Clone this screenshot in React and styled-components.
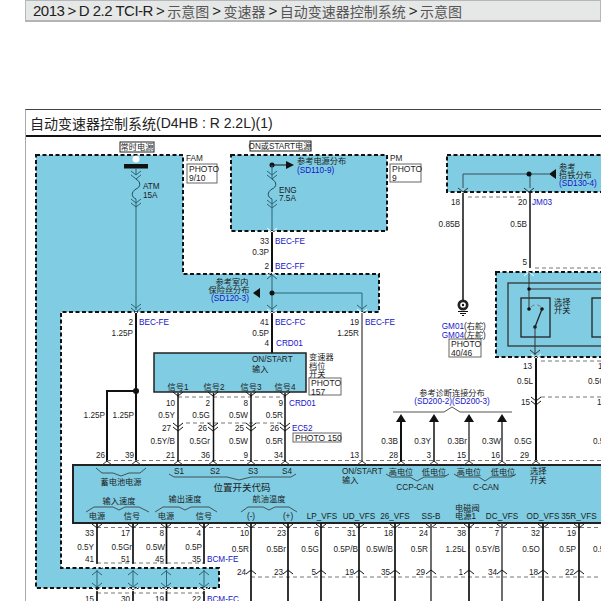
import React from 'react'
import styled, { createGlobalStyle } from 'styled-components'

const GlobalStyle = createGlobalStyle`
  html, body {
    margin: 0;
    padding: 0;
    background: #fff;
    overflow: hidden;
  }
`

const Page = styled.div`
  width: 601px;
  height: 601px;
  padding-left: 25px;
  box-sizing: border-box;
  overflow: hidden;
  font-family: "Liberation Sans", "Noto Sans CJK SC", sans-serif;
`

const Crumbs = styled.div`
  height: 22px;
  box-sizing: border-box;
  margin-bottom: 87px;
  padding-left: 7px;
  display: flex;
  align-items: center;
  gap: 3px;
  white-space: nowrap;
  background: #e6e7e7;
  border: 1px solid #b4b8bc;
  border-top: 1px solid #b4b8bc;
  border-bottom: 2px solid #b4b4b4;
  font-size: 15px;
  letter-spacing: -0.5px;
  color: #222;
`

const Zh = styled.span`
  font-family: "Noto Sans CJK SC", sans-serif;
  font-size: 14px;
  letter-spacing: 0;
  color: #555;
`

const Panel = styled.div`
  width: 600px;
  border-top: 1px solid #444;
  border-left: 1px solid #aaa;
`

const Title = styled.div`
  height: 25px;
  padding-left: 4px;
  display: flex;
  align-items: center;
  white-space: nowrap;
  border-bottom: 2px solid #111;
  font-family: "Noto Sans CJK SC", sans-serif;
  font-size: 14px;
  color: #222;
`

const TitleLatin = styled.span`
  font-family: "Liberation Sans", sans-serif;
  font-size: 14px;
`

const Diagram = styled.svg`
  display: block;
  width: 576px;
  height: 464px;
`

const Zone = styled.polygon`
  fill: #80cce2;
  stroke: #111;
  stroke-width: 2;
  stroke-dasharray: 4 2.5;
`

const Wire = styled.path`
  fill: none;
  stroke: ${(p) => p.$color || '#111'};
  stroke-width: ${(p) => p.$w || 1.5};
`

const Dash = styled.path`
  fill: none;
  stroke: #777;
  stroke-width: 1;
  stroke-dasharray: 4 3;
`

const Solid = styled.path`
  fill: ${(p) => p.$fill || '#111'};
`

const Box = styled.rect`
  fill: ${(p) => p.$fill || 'none'};
  stroke: ${(p) => p.$color || '#222'};
  stroke-width: ${(p) => p.$w || 1};
`

const Dot = styled.circle`
  fill: ${(p) => p.$fill || '#111'};
`

const Label = styled.text`
  font-family: "Liberation Sans", "Noto Sans CJK SC", sans-serif;
  font-size: ${(p) => p.$size || 8.2}px;
  fill: ${(p) => (p.$ref ? '#1414c8' : '#1c1c1c')};
  text-anchor: ${(p) => p.$anchor || 'start'};
`

const TEAL = '#2b6474'

const zones = [
  '35,155 182,155 182,274 378,274 378,312 60,312 60,568 218,568 218,588 35,588',
  '230,155 386,155 386,231 230,231',
  '446,155 610,155 610,192 446,192',
  '495,272 610,272 610,357 495,357',
]

// [x, y, text, anchor, isRef, size]
const labels = [
  // power feeds
  [136, 150, '常时电源', 'middle'],
  [279, 149, 'ON或START电源', 'middle'],
  [185, 161, 'FAM'],
  [142, 189, 'ATM'],
  [142, 198, '15A'],
  [278, 193, 'ENG'],
  [278, 201, '7.5A'],
  [296, 164, '参考电源分布'],
  [296, 172.5, '(SD110-9)', 'start', true],
  [389, 161, 'PM'],
  [558, 170, '参考'],
  [558, 178, '搭铁分布'],
  [558, 186, '(SD130-4)', 'start', true],
  [459, 205, '18', 'end'],
  [526, 205, '20', 'end'],
  [531, 205, 'JM03', 'start', true],
  [459, 227, '0.85B', 'end'],
  [526, 227, '0.5B', 'end'],
  [526, 265, '5', 'end'],
  // centre column
  [268, 244, '33', 'end'],
  [274, 244, 'BEC-FE', 'start', true],
  [268, 255, '0.3P', 'end'],
  [268, 269, '2', 'end'],
  [274, 269, 'BEC-FF', 'start', true],
  [231, 285, '参考室内', 'middle'],
  [228, 293, '保险丝分布', 'middle'],
  [229, 301, '(SD120-3)', 'middle', true],
  [268, 325, '41', 'end'],
  [274, 325, 'BEC-FC', 'start', true],
  [268, 336, '0.5P', 'end'],
  [268, 346, '4', 'end'],
  [275, 346, 'CRD01', 'start', true],
  [358, 325, '19', 'end'],
  [364, 325, 'BEC-FE', 'start', true],
  [358, 336, '1.25R', 'end'],
  [132, 325, '2', 'end'],
  [138, 325, 'BEC-FE', 'start', true],
  [132, 336, '1.25P', 'end'],
  // transmission switch
  [251, 362, 'ON/START'],
  [251, 372, '输入'],
  [308, 360, '变速器'],
  [308, 369, '档位'],
  [308, 377, '开关'],
  [177, 390, '信号1', 'middle'],
  [213, 390, '信号2', 'middle'],
  [250, 390, '信号3', 'middle'],
  [284, 390, '信号4', 'middle'],
  [174, 406, '10', 'end'],
  [209, 406, '2', 'end'],
  [247, 406, '8', 'end'],
  [282, 406, '9', 'end'],
  [288, 406, 'CRD01', 'start', true],
  [174, 418, '0.5Y', 'end'],
  [209, 418, '0.5G', 'end'],
  [247, 418, '0.5W', 'end'],
  [282, 418, '0.5R', 'end'],
  [170, 431, '27', 'end'],
  [206, 431, '26', 'end'],
  [243, 431, '25', 'end'],
  [278, 431, '26', 'end'],
  [291, 431, 'EC52', 'start', true],
  [174, 444, '0.5Y/B', 'end'],
  [209, 444, '0.5Gr', 'end'],
  [247, 444, '0.5W', 'end'],
  [282, 444, '0.5R', 'end'],
  [104, 418, '1.25P', 'end'],
  [133, 418, '1.25P', 'end'],
  [104, 458, '26', 'end'],
  [133, 458, '39', 'end'],
  [174, 458, '21', 'end'],
  [209, 458, '36', 'end'],
  [247, 458, '9', 'end'],
  [282, 458, '34', 'end'],
  [358, 458, '13', 'end'],
  [397, 458, '28', 'end'],
  [430, 458, '3', 'end'],
  [465, 458, '15', 'end'],
  [499, 458, '16', 'end'],
  [528, 458, '29', 'end'],
  [451, 396, '参考诊断连接分布', 'middle'],
  [451, 404, '(SD200-2)(SD200-3)', 'middle', true],
  [397, 444, '0.3B', 'end'],
  [430, 444, '0.3Y', 'end'],
  [466, 444, '0.3Br', 'end'],
  [500, 444, '0.3W', 'end'],
  [531, 444, '0.5G', 'end'],
  [592, 444, '0.5'],
  // ground and selector
  [463, 329, 'GM01', 'end', true],
  [463, 337.5, 'GM04', 'end', true],
  [463, 329, '(右舵)'],
  [463, 337.5, '(左舵)'],
  [553, 305, '选择'],
  [553, 313, '开关'],
  [531, 369, '13', 'end'],
  [532, 384, '0.5L', 'end'],
  [529, 405, '15', 'end'],
  [597, 369, '1'],
  [587, 384, '0.50'],
  [596, 405, '15'],
  // TCM connector, upper row
  [178, 474, 'S1', 'middle'],
  [214, 474, 'S2', 'middle'],
  [252, 474, 'S3', 'middle'],
  [286, 474, 'S4', 'middle'],
  [341, 474, 'ON/START'],
  [341, 483, '输入'],
  [400, 475, '高电位', 'middle'],
  [433, 475, '低电位', 'middle'],
  [468, 475, '高电位', 'middle'],
  [502, 475, '低电位', 'middle'],
  [529, 474, '选择'],
  [529, 483, '开关'],
  [414, 490, 'CCP-CAN', 'middle'],
  [485, 490, 'C-CAN', 'middle'],
  [120, 485, '蓄电池电源', 'middle'],
  [241, 491, '位置开关代码', 'middle', false, 9.5],
  [118, 504, '输入速度', 'middle'],
  [184, 502, '输出速度', 'middle'],
  [268, 502, '航油温度', 'middle'],
  // TCM connector, lower row
  [96, 519, '电源', 'middle'],
  [131, 519, '信号', 'middle'],
  [165, 519, '电源', 'middle'],
  [203, 519, '信号', 'middle'],
  [250, 519, '(-)', 'middle'],
  [287, 519, '(+)', 'middle'],
  [321, 519, 'LP_VFS', 'middle'],
  [358, 519, 'UD_VFS', 'middle'],
  [394, 519, '26_VFS', 'middle'],
  [430, 519, 'SS-B', 'middle'],
  [454, 511, '电磁阀'],
  [454, 519, '电源1'],
  [501, 519, 'DC_VFS', 'middle'],
  [542, 519, 'OD_VFS', 'middle'],
  [578, 519, '35R_VFS', 'middle'],
  // below connector
  [93, 536, '33', 'end'],
  [129, 536, '17', 'end'],
  [163, 536, '8', 'end'],
  [200, 536, '4', 'end'],
  [93, 550, '0.5Y', 'end'],
  [131, 550, '0.5Gr', 'end'],
  [164, 550, '0.5W', 'end'],
  [201, 550, '0.5P', 'end'],
  [93, 562, '41', 'end'],
  [129, 562, '51', 'end'],
  [163, 562, '45', 'end'],
  [200, 562, '35', 'end'],
  [206, 562, 'BCM-FE', 'start', true],
  [93, 602, '15', 'end'],
  [129, 602, '30', 'end'],
  [163, 602, '19', 'end'],
  [200, 602, '22', 'end'],
  [206, 602, 'BCM-FC', 'start', true],
  [248, 536, '10', 'end'],
  [285, 536, '23', 'end'],
  [318, 536, '6', 'end'],
  [355, 536, '31', 'end'],
  [392, 536, '18', 'end'],
  [427, 536, '24', 'end'],
  [465, 536, '38', 'end'],
  [498, 536, '7', 'end'],
  [539, 536, '32', 'end'],
  [575, 536, '19', 'end'],
  [248, 552, '0.5R', 'end'],
  [285, 552, '0.5Br', 'end'],
  [318, 552, '0.5G', 'end'],
  [357, 552, '0.5P/B', 'end'],
  [392, 552, '0.5W/B', 'end'],
  [427, 552, '0.5R', 'end'],
  [465, 552, '1.25L', 'end'],
  [499, 552, '0.5Y/B', 'end'],
  [539, 552, '0.5O', 'end'],
  [575, 552, '0.5P', 'end'],
  [592, 552, '0.5'],
  [245, 575, '24', 'end'],
  [282, 575, '23', 'end'],
  [315, 575, '5', 'end'],
  [353, 575, '19', 'end'],
  [389, 575, '35', 'end'],
  [424, 575, '29', 'end'],
  [462, 575, '1', 'end'],
  [496, 575, '34', 'end'],
  [537, 575, '18', 'end'],
  [573, 575, '22', 'end'],
]

const topPins = [106, 135, 177, 212, 250, 284, 361, 400, 433, 468, 501, 535]
const bottomPins = [96, 132, 165, 203, 250, 287, 320, 358, 394, 430, 468, 501, 542, 578]

// Connector mark: a V for a plug, flipped for a socket
const Pin = ({ x, y, up, color = '#111' }) => (
  <Wire
    $w={1}
    $color={color}
    d={up ? `M${x - 5} ${y + 4} L${x} ${y} L${x + 5} ${y + 4}` : `M${x - 5} ${y - 4} L${x} ${y} L${x + 5} ${y - 4}`}
  />
)

const Chevrons = ({ x, y, color }) => (
  <>
    <Pin x={x} y={y} color={color} />
    <Pin x={x} y={y + 4} color={color} />
  </>
)

const Arrow = ({ x, y }) => <Solid d={`M${x - 5} ${y + 8} L${x} ${y} L${x + 5} ${y + 8} Z`} />

const ArrowLeft = ({ x, y }) => <Solid d={`M${x} ${y} L${x + 7} ${y - 5} L${x + 7} ${y + 5} Z`} />

const Photo = ({ x, y, w, h, lines }) => (
  <>
    <Box x={x} y={y} width={w} height={h} $fill="#fff" $color="#666" />
    {lines.map((line, i) => (
      <Label key={line} x={x + 2} y={y + 8 + i * 8.5} $size={8.5}>
        {line}
      </Label>
    ))}
  </>
)

const Fuse = ({ x, y }) => (
  <Wire $w={1} $color="#1d4a58" d={`M${x} ${y} c5 3 5 8 0 10 c-5 3 -5 8 0 10`} />
)

const App = () => (
  <Page>
    <GlobalStyle />
    <Crumbs>
      <span>2013</span>&gt;<span>D 2.2 TCI-R</span>&gt;<Zh>示意图</Zh>&gt;<Zh>变速器</Zh>&gt;
      <Zh>自动变速器控制系统</Zh>&gt;<Zh>示意图</Zh>
    </Crumbs>
    <Panel>
      <Title>
        自动变速器控制系统<TitleLatin>(D4HB : R 2.2L)(1)</TitleLatin>
      </Title>
      <Diagram viewBox="25 137 576 464">
        {zones.map((points) => (
          <Zone key={points} points={points} />
        ))}

        {/* battery feed */}
        <Box x={119} y={142} width={34} height={10} $fill="#fff" />
        <Box x={249} y={141} width={61} height={10} $fill="#fff" />
        <Solid d="M123 164 H147 V168.5 H123 Z" />
        <Dot cx={135} cy={159} r={3.5} $fill="#fff" />
        <Pin x={135} y={175} color={TEAL} />
        <Pin x={135} y={179} color={TEAL} />
        <Fuse x={135} y={179} />
        <Chevrons x={135} y={203} color={TEAL} />
        <Wire $w={1} $color={TEAL} d="M135 168 V175 M135 199 V310" />
        <Chevrons x={135} y={308} color={TEAL} />
        <Wire $w={2} d="M135 313 V462 M135 391 H106 V462" />
        <Dot cx={135} cy={391} r={3} />
        <Pin x={135} y={312} up color="#fff" />

        {/* ign feed */}
        <Dot cx={271} cy={165} r={2.5} />
        <Wire $w={1} d="M271 165 H290" />
        <Solid d="M285 161 L293 165 L285 169 Z" />
        <Pin x={271} y={175} color={TEAL} />
        <Pin x={271} y={179} color={TEAL} />
        <Fuse x={271} y={179} />
        <Wire $w={1} $color={TEAL} d="M271 165 V179 M271 199 V231" />
        <Chevrons x={271} y={204} color={TEAL} />
        <Wire $w={2} d="M271 232 V273 M271 313 V353" />
        <Wire $w={1} $color={TEAL} d="M271 274 V312 M271 293 H361 V312" />
        <Pin x={271} y={232} color="#fff" />
        <Pin x={271} y={272} up color="#fff" />
        <Pin x={271} y={275} up color={TEAL} />
        <Pin x={271} y={309} color={TEAL} />
        <Pin x={271} y={313} color="#fff" />
        <Pin x={361} y={309} color={TEAL} />
        <Pin x={361} y={313} color="#fff" />
        <Wire $w={1} d="M361 313 V462" />
        <Dot cx={271} cy={293} r={2.5} />
        <ArrowLeft x={252} y={293} />

        {/* ground splice */}
        <Wire $w={1} $color="#35505a" d="M462 188 V174 H548" />
        <Wire $w={1} $color="#35505a" d="M529 174 V188" />
        <Dot cx={528} cy={174} r={2.5} />
        <ArrowLeft x={548} y={174} />
        <Pin x={462} y={192} color="#333" />
        <Pin x={528} y={192} color="#333" />
        <Dash d="M467 197 H523" />
        <Wire d="M462 193 V300 M529 193 V268" />
        <Dot cx={462} cy={305} r={5.5} $fill="#222" />
        <Dot cx={462} cy={305} r={2.8} $fill="#fff" />
        <Dot cx={462} cy={305} r={1.2} />
        <Wire $w={1} d="M457 311.5 H467 M459 313.5 H465 M461 315.5 H463" />
        <Photo x={448} y={339} w={32} h={18} lines={['PHOTO', '40/46']} />

        {/* selector switch */}
        <Dash d="M534 268 H601" />
        <Pin x={528} y={272} up color="#fff" />
        <Box x={507} y={283} width={110} height={63} $color="#333" $w={1.3} />
        <Box x={520} y={298} width={29} height={39} $color="#222" $w={1.3} />
        <Box x={591} y={298} width={29} height={39} $color="#222" $w={1.3} />
        <Wire $w={1} $color="#333" d="M528 272 V309 M528 289 H601" />
        <Dot cx={528} cy={289} r={1.8} />
        <Dot cx={528} cy={309} r={1.8} />
        <Dot cx={541} cy={309} r={1.8} />
        <Dot cx={534} cy={327} r={1.8} />
        <Wire $w={1.3} $color="#222" d="M534 327 L541 309" />
        <Dash d="M530 307 C533 304 537 304 540 307" />
        <Wire $w={1} $color="#333" d="M534 327 V355" />
        <Pin x={534} y={354} color="#333" />
        <Dash d="M540 361 H601" />
        <Wire $w={2} d="M535 358 V462" />
        <Dash d="M540 397 H601" />
        <Chevrons x={535} y={401} />
        <Pin x={535} y={358} color="#fff" />

        {/* transmission range switch */}
        <Box x={153} y={353} width={152} height={39} $fill="#80cce2" $w={1.5} />
        <Dash d="M177 397 H284 M185 423 H284 M106 460.5 H601" />
        <Wire d="M177 393 V462 M212.5 393 V462 M250 393 V462 M284 393 V462" />
        {[177, 212, 250, 284].map((x) => (
          <React.Fragment key={x}>
            <Pin x={x} y={396} />
            <Chevrons x={x} y={427} />
          </React.Fragment>
        ))}
        <Photo x={308} y={378} w={32} h={17} lines={['PHOTO', '157']} />
        <Box x={292} y={433} width={48} height={9} $fill="#fff" $color="#666" />
        <Label x={294} y={441} $size={8.5}>
          PHOTO 150
        </Label>

        {/* diagnostics bus */}
        <Wire $w={1} $color="#555" d="M392 412 H443 L451 407 L459 412 H511" />
        <Wire $w={2} d="M400 420 V462" />
        <Wire $w={1.5} d="M433 420 V462" />
        <Wire $w={1.2} d="M468 420 V462" />
        <Wire $w={2} $color="#666" d="M501 420 V462" />
        {[400, 433, 468, 501].map((x) => (
          <Arrow key={x} x={x} y={414} />
        ))}

        {/* TCM */}
        <Box x={72} y={465} width={560} height={58} $fill="#80cce2" $w={2} />
        <Wire
          $w={0.8}
          $color="#333"
          d="M95 468 L101 473 H112 L120 476 L128 473 H139 L145 468 M168 474 L173 477 H226 L238 480 L250 477 H290 L295 474 M385 474 L390 477 H409 L416 481 L423 477 H443 L448 474 M453 474 L458 477 H478 L484 481 L490 477 H510 L515 474 M85 512 L93 507 H112 L118 510 L124 507 H138 L148 512 M154 512 L162 507 H178 L184 510 L190 507 H208 L216 512 M240 512 L247 507 H262 L268 510 L274 507 H288 L296 512"
        />
        {topPins.map((x) => (
          <Pin key={x} x={x} y={461} up color="#333" />
        ))}

        {/* below connector */}
        <Dash d="M96 527.5 H601 M96 563 H203 M96 593 H203 M250 577 H601" />
        {bottomPins.map((x) => (
          <Pin key={x} x={x} y={528} color="#222" />
        ))}
        <Wire
          $w={1.7}
          d="M96 523 V564 M132 523 V564 M165.5 523 V564 M203 523 V564 M96 589 V601 M132 589 V601 M165.5 589 V601 M203 589 V601"
        />
        <Wire $w={1} $color={TEAL} d="M96 570 V587 M132 570 V587 M165.5 570 V587 M203 570 V587" />
        {[96, 132, 165, 203].map((x) => (
          <React.Fragment key={x}>
            <Pin x={x} y={564} up color="#fff" />
            <Pin x={x} y={571} up color={TEAL} />
            <Pin x={x} y={587} color={TEAL} />
            <Pin x={x} y={591} color="#fff" />
          </React.Fragment>
        ))}
        <Wire
          $w={1.7}
          d="M250 523 V601 M287 523 V601 M320 523 V601 M358 523 V601 M394 523 V601 M468 523 V601 M542 523 V601 M578 523 V601"
        />
        <Wire $w={1.7} $color="#555" d="M430 523 V601 M501 523 V601" />
        {bottomPins.slice(4).map((x) => (
          <Pin key={x} x={x} y={570} up />
        ))}

        {labels.map(([x, y, text, anchor, isRef, size]) => (
          <Label key={`${x}-${y}-${text}`} x={x} y={y} $anchor={anchor} $ref={isRef} $size={size}>
            {text}
          </Label>
        ))}
        <Photo x={186} y={164} w={30} h={19} lines={['PHOTO', '9/10']} />
        <Photo x={389} y={164} w={31} h={18} lines={['PHOTO', '9']} />
      </Diagram>
    </Panel>
  </Page>
)

export default App
